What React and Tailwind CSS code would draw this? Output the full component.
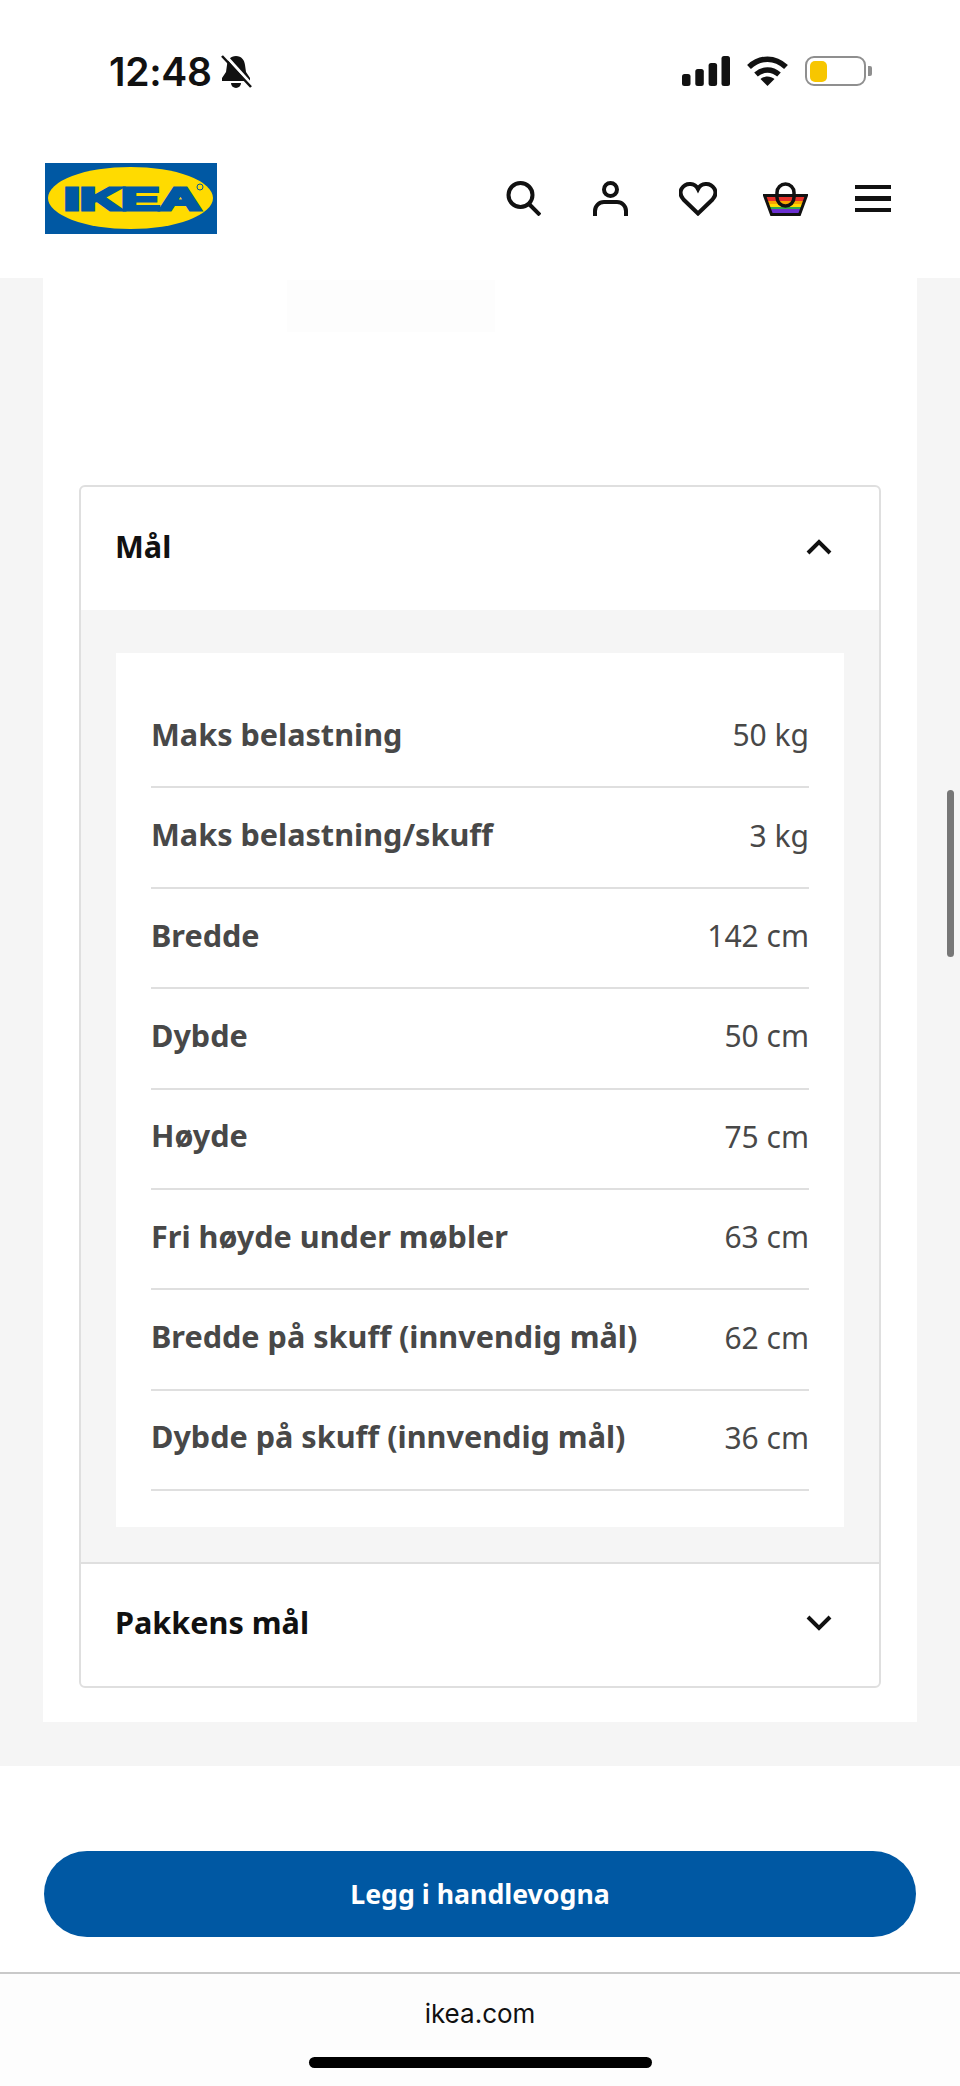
const rows = [
  ["Maks belastning", "50 kg"],
  ["Maks belastning/skuff", "3 kg"],
  ["Bredde", "142 cm"],
  ["Dybde", "50 cm"],
  ["Høyde", "75 cm"],
  ["Fri høyde under møbler", "63 cm"],
  ["Bredde på skuff (innvendig mål)", "62 cm"],
  ["Dybde på skuff (innvendig mål)", "36 cm"],
];

function StatusBar() {
  return (
    <div className="h-[118px] pt-[49px] pl-[109px] pr-[88px] flex justify-between items-start bg-white">
      <div className="flex items-center h-[44px] gap-[9px]">
        <span className="font-['Inter',sans-serif] font-semibold text-[39px] leading-none text-[#111] tracking-[-0.3px]">12:48</span>
        <svg width="31" height="33" viewBox="0 0 31 33">
          <path d="M15 1c-5.500 0-8.500 4-9 9l-1 7-4 6v3h28v-3l-4-6-1-7c-.5-5-3.500-9-9-9z" fill="#111" />
          <path d="M10 28a5 5 0 0 0 10 0z" fill="#111" />
          <path d="M4 0l27 30" stroke="#fff" strokeWidth="3" />
          <path d="M1 1l29 31" stroke="#111" strokeWidth="2.500" />
        </svg>
      </div>
      <div className="flex items-center h-[44px] gap-[17px]">
        <svg width="48" height="30" viewBox="0 0 48 30" fill="#111">
          <rect x="0" y="18" width="8.500" height="12" rx="2.500" />
          <rect x="13.300" y="13" width="8.500" height="17" rx="2.500" />
          <rect x="26.600" y="7" width="8.500" height="23" rx="2.500" />
          <rect x="39.500" y="0" width="8.500" height="30" rx="2.500" />
        </svg>
        <svg width="41" height="30" viewBox="0 0 41 30" fill="none" stroke="#111" strokeWidth="5.500">
          <path d="M2 11c11-10.500 26-10.500 37 0" />
          <path d="M9 18.500c7-6 16-6 23 0" />
          <path d="M20.500 30l-7-7c4-3.500 10-3.500 14 0z" fill="#111" stroke="none" />
        </svg>
        <div className="flex items-center gap-[2px]">
          <div className="w-[61px] h-[30px] rounded-[9px] border-[2.5px] border-[#8f8f8f] p-[2.5px] bg-white">
            <div className="w-[17px] h-full rounded-[5px] bg-[#f7c600]" />
          </div>
          <div className="w-[4px] h-[10px] rounded-r-[2px] bg-[#8f8f8f]" />
        </div>
      </div>
    </div>
  );
}

function Logo() {
  return (
    <svg width="172" height="71" viewBox="0 0 172 71">
      <rect width="172" height="71" fill="#0058a3" />
      <ellipse cx="85.500" cy="35" rx="82.500" ry="31" fill="#ffdb00" />
      <text x="87.500" y="47" textAnchor="middle" fill="#0058a3" fontFamily="'Liberation Sans',sans-serif" fontWeight="700" fontSize="31" stroke="#0058a3" strokeWidth="3" textLength="137" lengthAdjust="spacingAndGlyphs">IKEA</text>
      <circle cx="155" cy="24" r="3" fill="none" stroke="#0058a3" strokeWidth="1" />
    </svg>
  );
}

function Basket() {
  return (
    <svg width="45" height="34" viewBox="0 0 45 34">
      <defs>
        <clipPath id="basket-shape">
          <path d="M1 13h43l-7 20H8z" />
        </clipPath>
      </defs>
      <g clipPath="url(#basket-shape)">
        <rect x="0" y="13" width="45" height="6" fill="#e8312a" />
        <rect x="0" y="19" width="45" height="3" fill="#f7a600" />
        <rect x="0" y="22" width="45" height="3" fill="#ffdb00" />
        <rect x="0" y="25" width="45" height="2" fill="#2fa84f" />
        <rect x="0" y="27" width="45" height="7" fill="#6a2fd0" />
      </g>
      <path d="M1.500 13.500h42l-7 19h-28z" fill="none" stroke="#111" strokeWidth="3" />
      <rect x="14" y="2" width="17" height="22" rx="8.500" fill="none" stroke="#111" strokeWidth="3.500" />
    </svg>
  );
}

function Header() {
  return (
    <div className="h-[160px] pl-[45px] pr-[69px] pt-[45px] flex justify-between items-start bg-white">
      <Logo />
      <div className="flex items-center h-[71px]">
        <svg width="35" height="35" viewBox="0 0 35 35" fill="none" stroke="#111" strokeWidth="4">
          <circle cx="14.500" cy="14" r="12" />
          <path d="M23 23l11 11" />
        </svg>
        <svg className="ml-[52px]" width="35" height="35" viewBox="0 0 35 35" fill="none" stroke="#111" strokeWidth="4">
          <circle cx="17.500" cy="8.500" r="6.500" />
          <path d="M2 35v-5c0-5 4-9 9-9h13c5 0 9 4 9 9v5" />
        </svg>
        <svg className="ml-[51px]" width="38" height="35" viewBox="0 0 38 35" fill="none" stroke="#111" strokeWidth="4">
          <path d="M19 32.500L4.500 18.500c-7-8 0-16 7-15.500 3.500.2 6 2 7.500 5 1.500-3 4-4.800 7.500-5 7-.5 14 7.500 7 15.500z" />
        </svg>
        <div className="ml-[46px]">
          <Basket />
        </div>
        <div className="ml-[47px] w-[36px] flex flex-col gap-[7px]">
          <div className="h-[4.500px] bg-[#111]" />
          <div className="h-[4.500px] bg-[#111]" />
          <div className="h-[4.500px] bg-[#111]" />
        </div>
      </div>
    </div>
  );
}

function Chevron({ up }) {
  return (
    <svg width="26" height="16" viewBox="0 0 26 16" fill="none" stroke="#111" strokeWidth="4" className={up ? "" : "rotate-180"}>
      <path d="M2 14L13 3l11 11" />
    </svg>
  );
}

export default function App() {
  return (
    <div className="relative w-[960px] h-[2086px] overflow-hidden bg-white font-['Noto_Sans',sans-serif]">
      <StatusBar />
      <Header />

      <div className="h-[1488px] bg-[#f5f5f5] px-[43px] pb-[44px]">
        <div className="h-full bg-white pt-[2px] px-[36px]">
          {/* faint placeholder left over above the accordion */}
          <div className="ml-[208px] mb-[153px] w-[208px] h-[52px] bg-[#fdfdfd]" />

          <div className="rounded-[6px] border-[2px] border-[#dfdfdf] overflow-hidden">
            <div className="h-[123px] pl-[34px] pr-[47px] pb-[3px] flex justify-between items-center">
              <span className="text-[30.6px] font-bold text-[#111]">Mål</span>
              <Chevron up />
            </div>
            <div className="bg-[#f5f5f5] px-[35px] pt-[43px] pb-[35px] border-b-[2px] border-[#dfdfdf]">
              <div className="bg-white px-[35px] pt-[35px] pb-[36px]">
                {rows.map(([label, value]) => (
                  <div key={label} className="h-[100.400px] pb-[5px] border-b-[2px] border-[#dfdfdf] flex justify-between items-center text-[#484848]">
                    <span className="text-[30.6px] font-bold">{label}</span>
                    <span className="text-[30px]">{value}</span>
                  </div>
                ))}
              </div>
            </div>
            <div className="h-[122px] pl-[34px] pr-[47px] pb-[4px] flex justify-between items-center">
              <span className="text-[30.6px] font-bold text-[#111]">Pakkens mål</span>
              <Chevron />
            </div>
          </div>
        </div>
      </div>

      <div className="px-[44px] pt-[85px]">
        <button className="w-full h-[86px] rounded-full bg-[#0058a3] text-white text-[26.7px] font-bold">Legg i handlevogna</button>
      </div>

      <div className="mt-[35px] h-[114px] border-t-[2px] border-[#c9c9c9] bg-[#fdfdfd] flex flex-col items-center">
        <span className="mt-[24px] font-['Inter',sans-serif] text-[26px] leading-[32px] text-[#111]">ikea.com</span>
        <div className="mt-[27px] w-[343px] h-[11px] rounded-full bg-black" />
      </div>

      {/* page scrollbar */}
      <div className="absolute left-[947px] top-[790px] w-[7px] h-[167px] rounded-full bg-[#777]" />
    </div>
  );
}
